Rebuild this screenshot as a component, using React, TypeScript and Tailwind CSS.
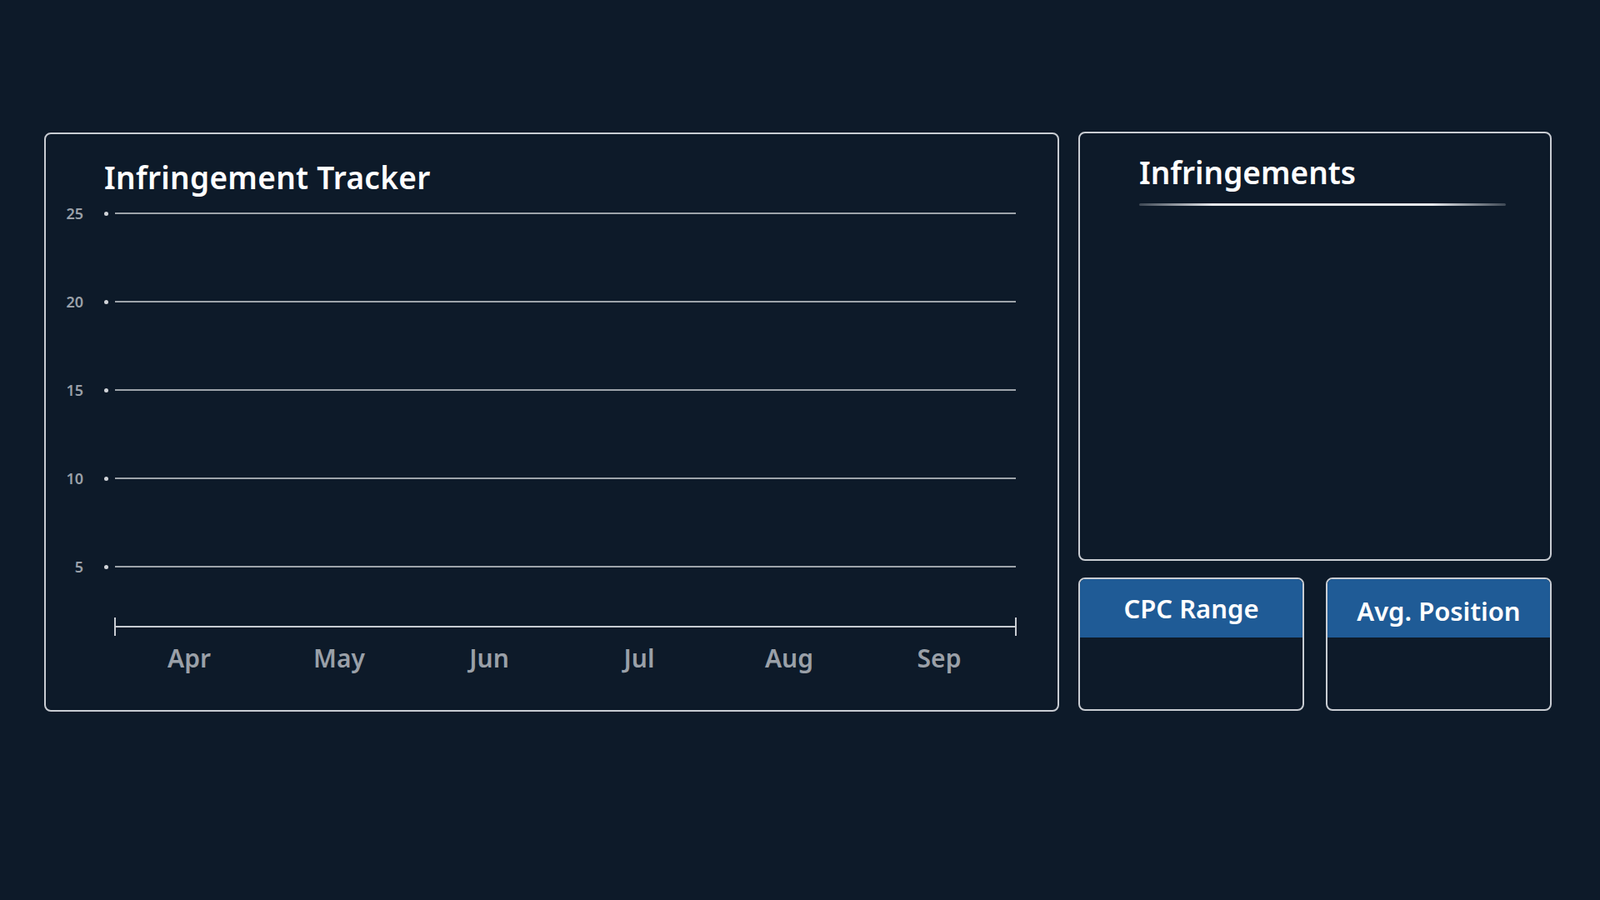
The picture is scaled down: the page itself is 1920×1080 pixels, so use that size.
export default function App() {
  const ticks = ['25', '20', '15', '10', '5'];
  const months = ['Apr', 'May', 'Jun', 'Jul', 'Aug', 'Sep'];
  return (
    <div className="w-[1920px] h-[1080px] bg-[#0d1a29] flex pt-[158px] pl-[53px] gap-[23px] font-['Lato',sans-serif] overflow-hidden">
      {/* Tracker */}
      <div className="w-[1218px] h-[695px] border-2 border-[#c8ccd2] rounded-[8px] flex flex-col mt-[1px]">
        <h1 className="text-white text-[37px] font-semibold ml-[70px] mt-[30px] leading-[44px] tracking-[0.3px]">Infringement Tracker</h1>
        <div className="flex flex-col gap-[84px] mt-[10px]">
          {ticks.map((t) => (
            <div key={t} className="flex items-center h-[22px]">
              <span className="w-[45px] text-right text-[#9aa0a8] text-[18px] font-semibold">{t}</span>
              <span className="ml-[25px] w-[5px] h-[5px] rounded-full bg-[#d0d3d8]" />
              <span className="ml-[8px] w-[1081px] h-[2px] bg-[#9da3aa]" />
            </div>
          ))}
        </div>
        <div className="ml-[82px] mt-[50px] w-[1083px] h-[22px] border-x-2 border-[#c8ccd2] flex items-center">
          <div className="w-full h-[2px] bg-[#c8ccd2]" />
        </div>
        <div className="ml-[82px] w-[1083px] flex mt-[4px]">
          {months.map((m, i) => (
            <span key={m} className={`text-[#9aa0a8] text-[30px] font-semibold text-center w-[180px] ${i === 0 ? 'ml-[0px]' : ''}`}>{m}</span>
          ))}
        </div>
      </div>
      {/* Right column */}
      <div className="w-[568px] flex flex-col gap-[20px]">
        <div className="h-[515px] border-2 border-[#c8ccd2] rounded-[8px] px-[71px] pt-[24px]">
          <h2 className="text-white text-[37px] font-semibold leading-[46px]">Infringements</h2>
          <div className="mt-[14px] h-[3px] w-[440px] rounded-full bg-[linear-gradient(90deg,rgba(255,255,255,0.2),#e5e7eb_20%,#e5e7eb_80%,rgba(255,255,255,0.2))]" />
        </div>
        <div className="flex gap-[26px]">
          {['CPC Range', 'Avg. Position'].map((t, i) => (
            <div key={t} className="w-[271px] h-[160px] border-2 border-[#c8ccd2] rounded-[8px] overflow-hidden flex flex-col">
              <div className="h-[70px] bg-[#1f5b96] flex items-center justify-center">
                <span className={`text-white text-[31px] font-semibold ${i === 1 ? 'mt-[6px]' : ''}`}>{t}</span>
              </div>
            </div>
          ))}
        </div>
      </div>
    </div>
  );
}
